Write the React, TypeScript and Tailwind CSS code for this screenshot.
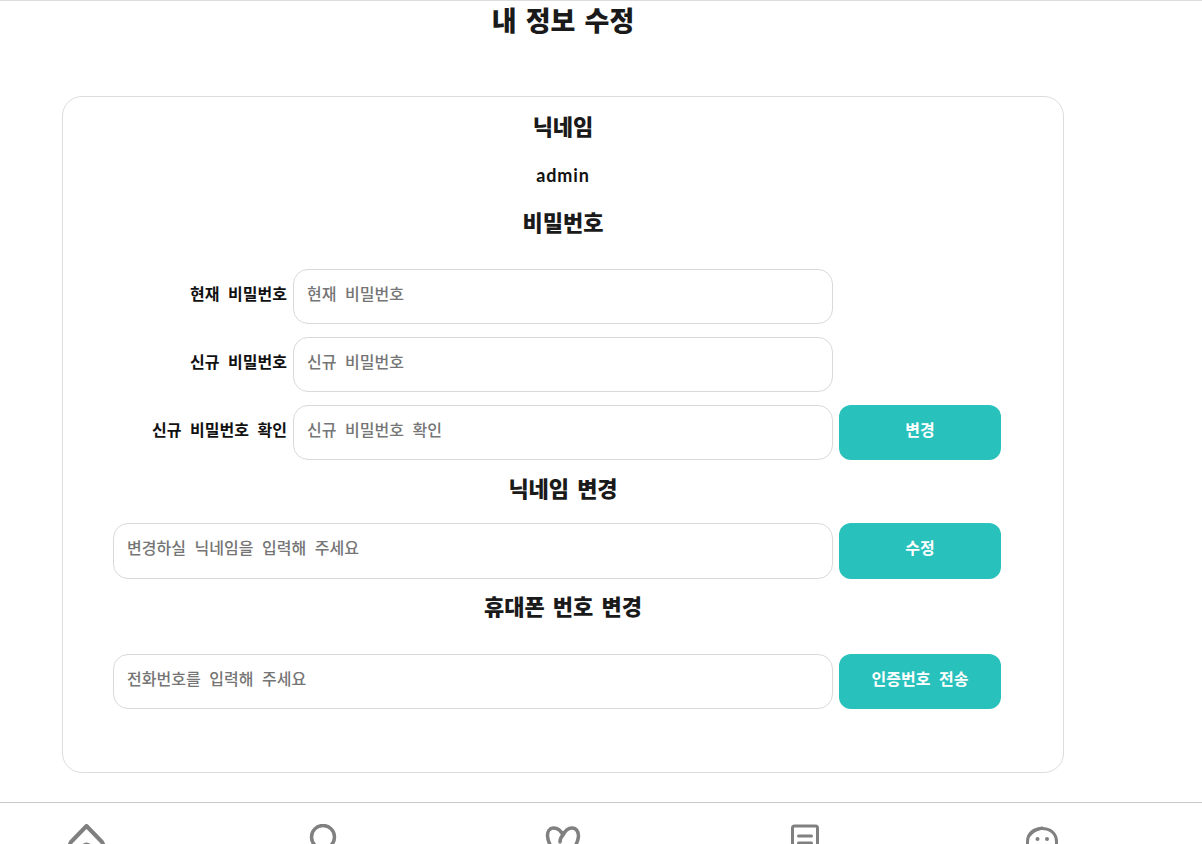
function Heading({ children, className }: { children: string; className: string }) {
  return <h2 className={`text-center text-[22px] leading-[30px] font-black text-[#1a1a1a] [word-spacing:3px] ${className}`}>{children}</h2>;
}

function Field({ placeholder, wide, tall }: { placeholder: string; wide?: boolean; tall?: boolean }) {
  return (
    <input
      readOnly
      placeholder={placeholder}
      className={`${wide ? "w-[720px]" : "w-[540px]"} ${tall ? "h-[56px]" : "h-[55px]"} rounded-[15px] border border-[#d9d9d9] bg-white px-[13px] pb-[8px] text-[16px] font-medium [word-spacing:5px] outline-none placeholder:text-[#757575]`}
    />
  );
}

function Btn({ children, tall }: { children: string; tall?: boolean }) {
  return (
    <button className={`ml-[6px] w-[162px] ${tall ? "h-[56px]" : "h-[55px]"} rounded-[12px] bg-[#29c1bc] pb-[8px] text-[16px] font-bold text-white [word-spacing:5px]`}>
      {children}
    </button>
  );
}

function PwRow({ label, placeholder, btn }: { label: string; placeholder: string; btn?: string }) {
  return (
    <div className="flex items-center">
      <label className="mr-[6px] w-[174px] pb-[8px] text-right text-[16px] font-bold text-[#111] [word-spacing:5px]">{label}</label>
      <Field placeholder={placeholder} />
      {btn ? <Btn>{btn}</Btn> : null}
    </div>
  );
}

const icons = [
  {
    margin: "ml-[66px]",
    width: 4,
    draw: (
      <g>
        <path d="M20.5 2 L5 18 Q2 23 5 27 L8 28 V38 H32 V28 L36 27 Q39 23 36 18 Z" />
        <path d="M16 30 Q16 20.5 20.5 20.5 Q25 20.5 25 30" />
      </g>
    ),
  },
  {
    margin: "ml-[197px]",
    width: 3.5,
    draw: (
      <g>
        <circle cx="20" cy="13" r="11.5" />
        <path d="M29 22 L36 34" />
      </g>
    ),
  },
  {
    margin: "ml-[200px]",
    width: 3.5,
    draw: <path d="M20 11 C15 1 4 2 4.5 12 C5 22 14 30 20 36 C26 30 35 22 35.5 12 C35 2 25 1 20 11 Q17 14 17 18" />,
  },
  {
    margin: "ml-[202px]",
    width: 3,
    draw: (
      <g>
        <rect x="7.5" y="2" width="25" height="36" rx="2" />
        <path d="M13.5 12 H26.5 M13.5 19 H26.5" />
      </g>
    ),
  },
  {
    margin: "ml-[197px]",
    width: 3,
    draw: (
      <g>
        <path d="M5.5 38 V18 C5.5 9 12 4.5 20 4.5 C28 4.5 34.5 9 34.5 18 V38" />
        <path d="M7 12 Q11 6 20 4" />
        <circle cx="15.5" cy="15" r="2" fill="#808080" stroke="none" />
        <circle cx="25" cy="15" r="2" fill="#808080" stroke="none" />
      </g>
    ),
  },
];

export default function App() {
  return (
    <div className="flex h-[844px] w-[1202px] flex-col overflow-hidden bg-white font-['Noto_Sans_CJK_KR','Noto_Sans',sans-serif]">
      <main className="h-[802px] shrink-0 border-t border-[#dcdcdc]">
        <div className="w-[1126px]">
          <h1 className="pt-[1px] text-center text-[27px] leading-[36px] font-black text-[#1a1a1a] [word-spacing:3px]">내 정보 수정</h1>
          <section className="mx-auto mt-[58px] h-[677px] w-[1002px] rounded-[20px] border border-[#dcdcdc] pt-[13px] pl-[50px]">
            <div className="w-[900px]">
              <Heading className="">닉네임</Heading>
              <p className="mt-[23px] text-center font-['Lato',sans-serif] text-[18px] leading-[24px] font-bold tracking-[0.9px] text-[#111]">admin</p>
              <Heading className="mt-[19px]">비밀번호</Heading>
              <div className="mt-[33px] flex flex-col gap-[13px]">
                <PwRow label="현재 비밀번호" placeholder="현재 비밀번호" />
                <PwRow label="신규 비밀번호" placeholder="신규 비밀번호" />
                <PwRow label="신규 비밀번호 확인" placeholder="신규 비밀번호 확인" btn="변경" />
              </div>
              <Heading className="mt-[12px]">닉네임 변경</Heading>
              <div className="mt-[21px] flex">
                <Field wide tall placeholder="변경하실 닉네임을 입력해 주세요" />
                <Btn tall>수정</Btn>
              </div>
              <Heading className="mt-[11px]">휴대폰 번호 변경</Heading>
              <div className="mt-[34px] flex">
                <Field wide placeholder="전화번호를 입력해 주세요" />
                <Btn>인증번호 전송</Btn>
              </div>
            </div>
          </section>
        </div>
      </main>
      <nav className="flex h-[42px] shrink-0 overflow-hidden border-t border-[#c8c8c8] pt-[21px]">
        {icons.map((icon, i) => (
          <svg key={i} className={`shrink-0 ${icon.margin}`} width="40" height="40" viewBox="0 0 40 40" fill="none" stroke="#808080" strokeWidth={icon.width} strokeLinecap="round" strokeLinejoin="round">
            {icon.draw}
          </svg>
        ))}
      </nav>
    </div>
  );
}
